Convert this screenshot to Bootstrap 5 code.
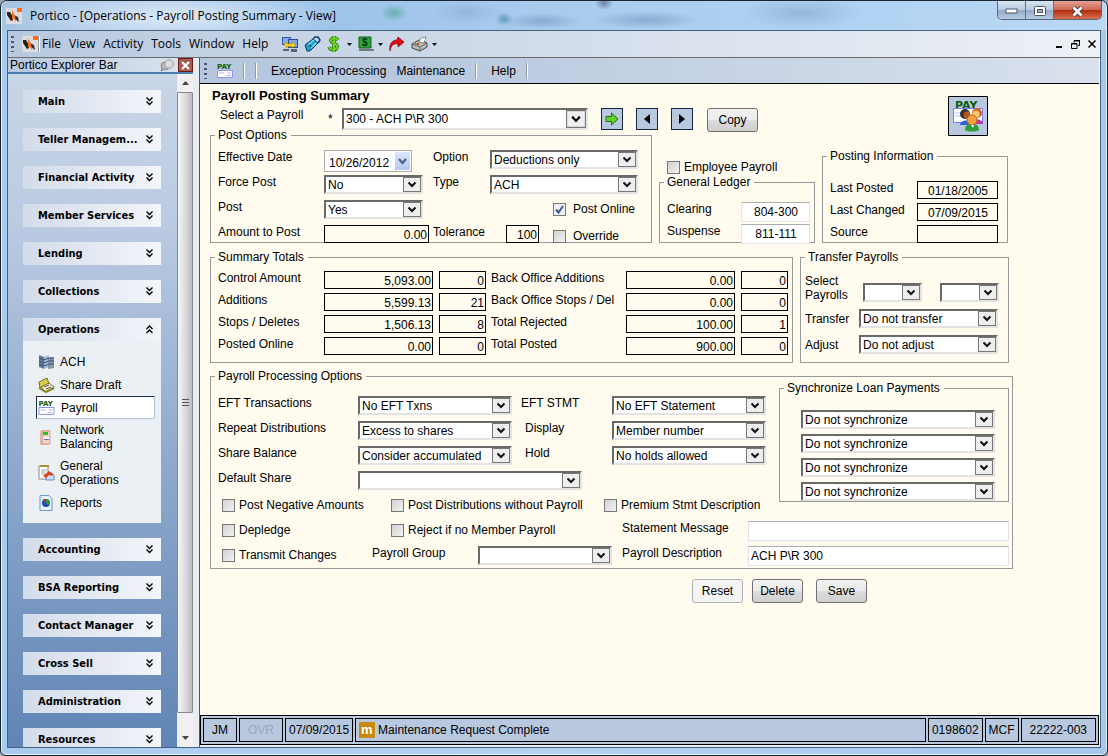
<!DOCTYPE html>
<html lang="en">
<head>
<meta charset="utf-8">
<meta name="viewport" content="width=device-width, initial-scale=1">
<title>Portico - Payroll Posting Summary</title>
<link href="https://cdn.jsdelivr.net/npm/bootstrap@5.3.0/dist/css/bootstrap.min.css" rel="stylesheet">
<style>
body{font:12px/14px "Liberation Sans",Arial,sans-serif;color:#000;background:#9aa7b8}
.win{border:1px solid #1b2530;border-radius:7px 7px 6px 6px;background:linear-gradient(90deg,#a9cbee,#b3d3f3 50%,#a5c8ec);box-shadow:inset 0 0 0 1px #e4f1fd;padding:0 6px 7px}
.titlebar{height:29px;margin:0 -5px;padding-left:4px;border-radius:6px 6px 0 0;font:12px/16px "Open Sans","Segoe UI",sans-serif;
 background:radial-gradient(170px 30px at 170px 16px,rgba(240,247,255,.75),transparent),
 radial-gradient(14px 9px at 392px 12px,#3f9c8188,transparent),radial-gradient(34px 12px at 465px 11px,#7394b955,transparent),
 radial-gradient(9px 7px at 502px 18px,#3c7ea799,transparent),radial-gradient(40px 8px at 540px 20px,#5878a066,transparent),
 radial-gradient(9px 7px at 602px 2px,#3f506e99,transparent),radial-gradient(54px 9px at 645px 19px,#5878a066,transparent),
 radial-gradient(60px 16px at 800px 12px,#6f90b666,transparent),
 linear-gradient(90deg,#a7c4e2,#9dc3ea 28%,#a9cbee 50%,#b0d2f2 75%,#b9d8f5)}
.titlebar,.menubar{flex:none}
.capbtns{height:19px;border:1px solid #56657a;border-top:0;border-radius:0 0 5px 5px;overflow:hidden}
.capbtns button{width:28px;height:19px;border:0;border-right:1px solid #5f7086;padding:0;background:linear-gradient(#d8e5f2,#b9cce0 45%,#93abc6 50%,#b9d0e8)}
.capbtns .close-x{width:47px;border-right:0;background:linear-gradient(#e3a195,#cf6a58 45%,#b32b12 50%,#dc7a56)}
.client{border:1px solid #47607c;background:#e9edf3}
.menubar{height:27px;padding:0 4px 0 3px;border-bottom:1px solid #6b6b6b;background:linear-gradient(90deg,#b8c9df,#cdd9e8 40%,#eef1f6);font:12px/16px "Open Sans","Segoe UI",sans-serif}
.menus{gap:8px;margin:0 14px 0 2px}
.icons{gap:6px}
.icons .drop{display:flex;align-items:center;gap:4px}
.grip{width:3px;height:16px;background:repeating-linear-gradient(#44587c 0 2px,transparent 2px 5px)}
.menubar a,.tools a{color:#000;text-decoration:none}
.plain{border:0;background:none;padding:0;line-height:0}
.side{width:185px;flex:none}
.sidehead{height:16px;border-bottom:2px solid #4d7db0;background:linear-gradient(90deg,#b7c7de,#dde5ef);padding-left:2px}
.pinx{width:15px;height:14px;border:1px solid #6e1a12;background:#a85b50;padding:0;line-height:0}
.sidenav{background:linear-gradient(#c8d5e6,#bccbe2 22%,#a3b9d7 40%,#6085b5);padding:16px 16px 0 15px;overflow:hidden;min-height:0}
.sidenav section{margin-bottom:15px}
.grp{display:flex;align-items:center;width:100%;height:23px;border:0;padding:0 8px 0 15px;background:linear-gradient(90deg,#d3dcea,#f3f5fa);font:bold 11px/14px "DejaVu Sans Condensed","Noto Sans",Tahoma,sans-serif;text-align:left;white-space:nowrap}
.grp svg{margin-left:auto}
.opl{background:#ebf0f4;padding:9px 6px 9px 13px;margin:0}
.opl a{display:flex;align-items:center;gap:5px;min-height:23px;color:#000;text-decoration:none;padding:0 0 0 2px}
.opl a span{padding:4px 0}
.opl a.active{background:#fff;border:1px solid #b3c5dc;border-top-color:#1c2f48;border-left-color:#1c2f48;padding-left:1px;gap:6px}
.opl svg{flex:none}
.scroll{width:16px;flex:none;background:#f0f0f0}
.scroll button{height:18px;border:0;padding:0;background:none;line-height:0}
.thumb{border:1px solid #888;border-radius:1px;background:linear-gradient(90deg,#f6f6f6,#dcdce0 50%,#bbbbc1)}
.mainpane{border-left:1px solid #555;border-right:1px solid #fff;margin-left:6px;min-width:0}
.tools{height:26px;border-bottom:1px solid #000;background:linear-gradient(90deg,#b6c7de 20%,#d9e1ec);flex:none;gap:10px}
.vsep{width:2px;height:16px;border-left:1px solid #909aa8;background:#fff}
.form-area{background:#fffbef;padding:0 11px 0 10px;min-height:0;overflow:hidden}
.head{height:45px}
.form-area h1{font:bold 13px/14px "Liberation Sans",Arial,sans-serif;margin:5px 0 5px 2px}
.head .lab{width:118px;padding-left:10px}
.head .star{width:14px;padding-top:4px}
.head .sq{margin-left:13px}
.head .cmd{margin-left:14px}
.payimg{margin:12px 100px 0 0;flex:none}
fieldset{border:1px solid #999;padding:0 7px;margin:0;min-width:0}
fieldset legend{float:none;width:auto;font-size:12px;line-height:12px;padding:0 4px 0 3px;margin:0 0 0 -3px}
.form-area label{line-height:14px;white-space:nowrap}
.form-area select{appearance:none;font-size:12px;line-height:14px;height:19px;padding:0 18px 0 2px;color:#000;border:2px solid #e3e3e3;border-top-color:#696969;border-left-color:#696969;border-radius:0;
 background:#fff url("data:image/svg+xml,%3Csvg xmlns='http://www.w3.org/2000/svg' width='18' height='15'%3E%3Crect x='.5' y='.5' width='17' height='14' fill='%23eee' stroke='%23777'/%3E%3Cpath d='M5.500 5.500 9 9l3.500-3.500' fill='none' stroke='%23111' stroke-width='2'/%3E%3C/svg%3E") no-repeat right center}
.form-area select.tall{height:22px;background-size:20px 18px;padding-right:20px}
.form-area input[type=text]{font-size:12px;line-height:14px;height:18px;padding:1px 1px 0 2px;border:1px solid #000;border-radius:0;background:#fffbef;color:#000}
.form-area input.edit{height:20px;padding-top:0;border-color:#abadb3 #e2e3ea #e2e3ea #e2e3ea;background:#fff}
.num{text-align:right}.ctr{text-align:center}
.form-area input[type=checkbox]{appearance:none;width:13px;height:13px;flex:none;border:1px solid #777;background:linear-gradient(135deg,#d2d2d4,#f3f3f3)}
.form-area input[type=checkbox]:checked{background:#eef0f4 url("data:image/svg+xml,%3Csvg xmlns='http://www.w3.org/2000/svg' width='11' height='11'%3E%3Cpath d='M2 5.500 4.500 8.500 9 2' fill='none' stroke='%233c5a94' stroke-width='2'/%3E%3C/svg%3E")}
.chk{display:flex;align-items:center;gap:4px;height:18px}
.fgrid{display:grid;align-items:start}
.w-date{width:88px;height:22px;border:1px solid #aaa;background:#fff}
.form-area .w-date input{border:0;background:#fff;height:20px;width:66px;padding:3px 0 0 4px}
.w-date button{width:15px;height:18px;margin:1px;border:0;padding:0;line-height:0;background:linear-gradient(#dbe6fc,#b4c8f2)}
.sq{width:22px;height:22px;border:1px solid #16263c;background:#b8c9df;padding:0;line-height:0}
.cmd{min-width:51px;height:24px;border:1px solid #707070;border-radius:3px;padding:0 6px;background:linear-gradient(#f2f2f2,#ebebeb 48%,#dcdcdc 52%,#cfcfcf);font-size:12px;line-height:14px}
.cmd.off{border-color:#adb2b5;background:#f4f4f4}
.s99{width:99px}.s148{width:148px}.s154{width:154px}.s139{width:139px}.s194{width:194px}.s59{width:59px}.s223{width:224px}.s134{width:134px}.s246{width:246px}
.g-post{grid-template:25px 25px 25px 17px / 106px 109px 57px 1fr;padding-top:9px}
.g-gl{grid-template:22px 18px / 74px 69px;padding-top:14px}
.g-info{grid-template:22px 22px 17px / 87px 81px;padding-top:19px}
.g-sum{grid-template:repeat(4,22px) / 106px 115px 52px 135px 115px 47px;padding:8px 0 3px}
.g-sum>:nth-child(3n+2){width:109px}.g-sum>:nth-child(3n){width:47px}
.g-proc{grid-template:repeat(4,25px) / 140px 163px 91px 154px;padding-top:14px}
.fgrid label{justify-self:start}
.gap7{gap:7px}
.f-post{width:442px}.f-gl{width:156px}.f-info{width:186px}.f-sum{width:583px}.f-trans{width:209px;padding:0 4px}.f-proc{width:803px}
fieldset.f-proc{margin-top:7px;padding-right:3px}
.f-trans legend{margin-left:0}
.offs{padding-left:63px}.w105{width:105px}
.chk.offs,.tolrow .chk{gap:7px}
.tolrow .chk{height:22px}
.tolrow input#tol{width:33px;margin:0 14px 0 16px}
.trrows{gap:7px;padding-top:11px}
.trrows>div{gap:18px}
.trrows label{width:54px;margin-right:-18px}
.f-sync{width:230px;flex:none}
.syncs{gap:5px;padding:16px 0 0 14px}
.lowrow{height:25px}.lastrow{height:22px}
.c169{width:169px}.c213{width:213px}.c231{width:231px}.c126{width:126px}.c150{width:150px}.c106{width:106px}.c144{width:144px}
.btnrow{justify-content:flex-end;gap:9px;margin-top:10px;padding-right:146px}
.status{flex:none;background:#b8c9df;border:1px solid #000;padding:2px;gap:2px;height:30px;margin-bottom:2px}
.status>div{border:1px solid #000;height:24px;padding:0 8px;display:flex;align-items:center;justify-content:center;white-space:nowrap}
.status .text-dim{color:#9aa6b6}
.status .slim{padding:0 3px}
.status .msgcell{justify-content:flex-start;padding-left:3px;gap:3px}
</style>
</head>
<body>
<svg width="0" height="0" class="position-absolute" aria-hidden="true"><defs>
<symbol id="logo" viewBox="0 0 16 16"><path d="M0 0h16v16H0z" fill="#dcdcdf"/><path d="M1 4h3l3 5v3L5 13 1 7z" fill="#222"/><path d="M8 7l4 2 1 5-4-3z" fill="#333"/><path d="M6 2l3 6 1 6-3-4-1 2z" fill="#f36f21"/><path d="M11 0h5v4h-5z" fill="#ff6a13"/></symbol>
<symbol id="down" viewBox="0 0 7 9"><path d="M.5.500 3.500 3.500 6.500.5M.5 4.500 3.500 7.500 6.500 4.500" fill="none" stroke="#000" stroke-width="1.400"/></symbol>
<symbol id="up" viewBox="0 0 7 9"><path d="M.5 4 3.500 1 6.500 4M.5 8 3.500 5 6.500 8" fill="none" stroke="#000" stroke-width="1.400"/></symbol>
<symbol id="pay" viewBox="0 0 16 16"><text x="0" y="6" font-family="DejaVu Sans" font-weight="bold" font-size="7" fill="#0b5a0b">PAY</text><path d="M.5 7.500h15v7H.5z" fill="#fff" stroke="#8f8fff"/><path d="M2 10h5M10 10h4M9 12.500h5" stroke="#b5b5f5"/></symbol>
</defs></svg>

<div class="win vh-100 d-flex flex-column">
 <header class="titlebar d-flex align-items-center">
  <svg width="16" height="16" class="me-2"><use href="#logo"/></svg>
  <span class="flex-grow-1">Portico - [Operations - Payroll Posting Summary - View]</span>
  <div class="capbtns d-flex align-self-start me-1">
   <button aria-label="Minimize"><svg width="13" height="6"><rect x="1" y="1" width="11" height="4" fill="#fff" stroke="#4d596b"/></svg></button>
   <button aria-label="Maximize"><svg width="12" height="10"><rect x=".5" y=".5" width="11" height="9" rx="1" fill="#fff" stroke="#4d596b"/><rect x="3.500" y="3.500" width="5" height="3" fill="#9bb2cc" stroke="#4d596b"/></svg></button>
   <button class="close-x" aria-label="Close"><svg width="13" height="11"><path d="M2.500 1.500 10.500 9.500M10.500 1.500 2.500 9.500" stroke="#53323a" stroke-width="4.500"/><path d="M2.500 1.500 10.500 9.500M10.500 1.500 2.500 9.500" stroke="#fff" stroke-width="2.600"/></svg></button>
  </div>
 </header>

 <div class="client flex-grow-1 d-flex flex-column overflow-hidden">
  <nav class="menubar d-flex align-items-center">
   <span class="grip me-2"></span>
   <svg width="16" height="16"><use href="#logo"/></svg><span class="vsep"></span>
   <div class="d-flex flex-grow-1 align-items-center">
    <div class="d-flex menus"><a href="#">File</a><a href="#">View</a><a href="#">Activity</a><a href="#">Tools</a><a href="#">Window</a><a href="#">Help</a></div>
    <div class="d-flex align-items-center icons">
    <button class="plain" aria-label="Connect"><svg width="16" height="15"><path d="M0 0h9v8H0z" fill="#3553a4"/><path d="M1 1h7v6H1z" fill="#7db2f2"/><path d="M6 2h10v9H6z" fill="#2f4690"/><path d="M7 3h8v7H7z" fill="#7fa8ea"/><path d="M2 8l3-3v2h5V5l4 3-4 3V9.500H5V11z" fill="#ffd21e" stroke="#a97c00" stroke-width=".5"/><path d="M1 12h6v2H1zM9 12h6v3H9z" fill="#5d6272"/></svg></button>
    <button class="plain" aria-label="Card reader"><svg width="17" height="16"><path d="M1 9 9 3l5 4-8 8H3z" fill="#1d9cc9" stroke="#0a3d66"/><path d="M9 3l2-2h3l2 3-2 3M4 8l5 4" fill="none" stroke="#0a3d66" stroke-width="1.500"/><path d="M4 9l6-5M7 12l5-5" stroke="#7bdcf3" stroke-width="1.500"/></svg></button>
    <div class="drop"><button class="plain" aria-label="Money"><svg width="16" height="16"><path d="M11 4C9 1 3 2 4 5s7 2 6 6-7 3-8 0M7 0v16" fill="none" stroke="#1d6d10" stroke-width="3.400"/><path d="M11 4C9 1 3 2 4 5s7 2 6 6-7 3-8 0M7 0v16" fill="none" stroke="#6fd11f" stroke-width="2"/></svg></button>
    <svg width="5" height="3"><path d="M0 0h5L2.500 3z"/></svg></div>
    <div class="drop"><button class="plain" aria-label="Cash"><svg width="16" height="16"><path d="M1 1h12v11H1z" fill="#2ca53c" stroke="#145c1d"/><path d="M1 13h15v2H1z" fill="#778"/><text x="4" y="10" font-size="10" font-weight="bold" font-family="Liberation Sans" fill="#031">$</text></svg></button>
    <svg width="5" height="3"><path d="M0 0h5L2.500 3z"/></svg></div>
    <button class="plain" aria-label="Forward"><svg width="16" height="16"><path d="M1 15C0 8 3 4 8 4l1-3 6 5-6 5V8C5 7 2 9 1 15z" fill="#e00b12" stroke="#7e0508" stroke-width=".7"/></svg></button>
    <div class="drop"><button class="plain" aria-label="Print"><svg width="17" height="16"><path d="M1 8l7-4 8 3v4l-7 4-8-3z" fill="#bdbdb8" stroke="#444"/><path d="M8 6l2-4 5-1-2 6z" fill="#fff" stroke="#555" stroke-width=".6"/><path d="M1 8l8 3 7-4M9 11v4" fill="none" stroke="#666"/><path d="M6 8h2" stroke="#e22" stroke-width="2"/><path d="M4 8h1.500" stroke="#2c2" stroke-width="2"/></svg></button>
    <svg width="5" height="3"><path d="M0 0h5L2.500 3z"/></svg></div>
    </div>
   </div>
   <button class="plain me-1" aria-label="Minimize document"><svg width="8" height="8"><path d="M1 6h6v2H1z"/></svg></button>
   <button class="plain mx-1" aria-label="Restore document"><svg width="9" height="9"><path d="M3 2.500V1h5.500v4.500H7M3 .5h6M.5 3.500h5.500v5H.5zM0 4h6" fill="none" stroke="#000"/></svg></button>
   <button class="plain ms-1" aria-label="Close document"><svg width="8" height="8"><path d="M.5.500l7 7M7.500.5l-7 7" stroke="#000" stroke-width="1.500"/></svg></button>
  </nav>

  <div class="d-flex flex-grow-1 overflow-hidden">
   <aside class="side d-flex flex-column">
    <div class="sidehead d-flex align-items-center">
     <span class="flex-grow-1">Portico Explorer Bar</span>
     <button class="plain me-1" aria-label="Pin"><svg width="14" height="13"><path d="M1 12l4-4" stroke="#777" stroke-width="1.500"/><ellipse cx="5" cy="7" rx="4" ry="4" fill="#bbb" stroke="#888"/><circle cx="9" cy="5" r="4.300" fill="#ddd" stroke="#999"/></svg></button>
     <button class="pinx" aria-label="Close bar"><svg width="9" height="9"><path d="M1 1l7 7M8 1 1 8" stroke="#fff" stroke-width="2.200"/></svg></button>
    </div>
    <div class="d-flex flex-grow-1 overflow-hidden">
     <nav class="sidenav flex-grow-1">
      <section><button class="grp">Main<svg width="7" height="9"><use href="#down"/></svg></button></section>
      <section><button class="grp">Teller Managem...<svg width="7" height="9"><use href="#down"/></svg></button></section>
      <section><button class="grp">Financial Activity<svg width="7" height="9"><use href="#down"/></svg></button></section>
      <section><button class="grp">Member Services<svg width="7" height="9"><use href="#down"/></svg></button></section>
      <section><button class="grp">Lending<svg width="7" height="9"><use href="#down"/></svg></button></section>
      <section><button class="grp">Collections<svg width="7" height="9"><use href="#down"/></svg></button></section>
      <section><button class="grp">Operations<svg width="7" height="9"><use href="#up"/></svg></button>
       <ul class="opl list-unstyled">
        <li><a href="#"><svg width="17" height="16"><path d="M1 1l5 2v12l-5-2z" fill="#5f7a9e"/><path d="M6 3l5-2v12l-5 2z" fill="#a9bad0"/><path d="M10 4l6-1v11l-6 1z" fill="#8795aa"/><path d="M1 4l5 2 5-2 5 0M1 7l5 2 5-2 5 0M1 10l5 2 5-2 5 0" fill="none" stroke="#3c4f6e"/></svg>ACH</a></li>
        <li><a href="#"><svg width="17" height="16"><path d="M1 5l8-4 2 6-9 4z" fill="#d8c94a" stroke="#77701c"/><path d="M3 10l8-4 5 4-8 5z" fill="#ecebd0" stroke="#77701c"/><path d="M1 11l7 4 8-4" fill="none" stroke="#8c8424" stroke-width="2"/><path d="M6 10l5-2M8 12l5-2" stroke="#555"/></svg>Share Draft</a></li>
        <li><a href="#" class="active"><svg width="17" height="16"><use href="#pay"/></svg>Payroll</a></li>
        <li><a href="#"><svg width="17" height="16"><path d="M2 2l2-1h8v13l-2 2H2z" fill="#e8b9ab"/><path d="M4 2h8v13H4z" fill="#f3d3c8" stroke="#c78e7e" stroke-width=".7"/><path d="M5 3h5v3H5z" fill="#22c52a"/><path d="M6 8h5v2H6z" fill="#fff"/><path d="M6 10.500h5" stroke="#7d6ab8"/></svg><span>Network<br>Balancing</span></a></li>
        <li><a href="#"><svg width="17" height="16"><path d="M1 1h9v13H1z" fill="#fff" stroke="#888"/><path d="M2 1h9" stroke="#b08d2f" stroke-width="2"/><path d="M3 5h6M3 7h5M3 9h4" stroke="#9ab"/><path d="M8 10l4-3 4 3v5H8z" fill="#cfe0f5" stroke="#3c64a5" stroke-width=".7"/><path d="M5 11l6-5 4 3-1 2-3-1-3 3z" fill="#d8421f"/></svg><span>General<br>Operations</span></a></li>
        <li><a href="#"><svg width="17" height="16"><path d="M2 .5h9l3 3v12H2z" fill="#e8f1fc" stroke="#6f96c8"/><circle cx="8" cy="8" r="4" fill="#2748b8"/><path d="M8 8V4a4 4 0 0 1 3 6.500z" fill="#2aa637"/><path d="M8 8l-3-3a4 4 0 0 1 3-1z" fill="#d22"/></svg>Reports</a></li>
       </ul>
      </section>
      <section><button class="grp">Accounting<svg width="7" height="9"><use href="#down"/></svg></button></section>
      <section><button class="grp">BSA Reporting<svg width="7" height="9"><use href="#down"/></svg></button></section>
      <section><button class="grp">Contact Manager<svg width="7" height="9"><use href="#down"/></svg></button></section>
      <section><button class="grp">Cross Sell<svg width="7" height="9"><use href="#down"/></svg></button></section>
      <section><button class="grp">Administration<svg width="7" height="9"><use href="#down"/></svg></button></section>
      <section><button class="grp">Resources<svg width="7" height="9"><use href="#down"/></svg></button></section>
     </nav>
     <div class="scroll d-flex flex-column">
      <button aria-label="Scroll up"><svg width="7" height="4"><path d="M3.500 0 7 4H0z" fill="#444"/></svg></button>
      <div class="thumb flex-grow-1 d-flex align-items-center justify-content-center mb-3"><svg width="7" height="8"><path d="M0 .5h7M0 3.500h7M0 6.500h7" stroke="#555"/></svg></div>
      <button aria-label="Scroll down"><svg width="7" height="4"><path d="M0 0h7L3.500 4z" fill="#444"/></svg></button>
     </div>
    </div>
   </aside>

   <main class="mainpane flex-grow-1 d-flex flex-column">
    <nav class="tools d-flex align-items-center ps-1">
     <span class="grip"></span><svg width="16" height="16"><use href="#pay"/></svg>
     <span class="vsep"></span><span class="vsep me-1"></span>
     <a href="#">Exception Processing</a><a href="#">Maintenance</a><span class="vsep me-1"></span>
     <a href="#">Help</a><span class="vsep"></span>
    </nav>

    <form class="form-area flex-grow-1">
     <div class="head d-flex justify-content-between">
      <div>
       <h1>Payroll Posting Summary</h1>
       <div class="d-flex align-items-start">
        <label for="payroll" class="lab">Select a Payroll</label><span class="star">*</span>
        <select id="payroll" class="tall s246"><option>300 - ACH P\R 300</option></select>
        <button type="button" class="sq" aria-label="Go"><svg width="14" height="14"><path d="M1 4.500h5.500V1L13 7l-6.500 6V9.500H1z" fill="#62d22b" stroke="#207211"/></svg></button>
        <button type="button" class="sq" aria-label="Previous"><svg width="6" height="10"><path d="M6 0v10L0 5z"/></svg></button>
        <button type="button" class="sq" aria-label="Next"><svg width="6" height="10"><path d="M0 0v10l6-5z"/></svg></button>
        <button type="button" class="cmd">Copy</button>
       </div>
      </div>
      <svg width="40" height="40" class="payimg"><path d="M.5.500h39v39H.5z" fill="#b8c9df" stroke="#000"/><text x="7" y="13" font-family="DejaVu Sans" font-weight="bold" font-size="11" fill="#0b5a0b">PAY</text><path d="M5.500 12.500h29v14h-29z" fill="#fff" stroke="#7d7df5"/><path d="M7 17h8M7 20h6" stroke="#bbf"/><path d="M12 29c0-6 12-6 12 0z" fill="#2d62d8"/><circle cx="17" cy="18" r="5" fill="#333"/><circle cx="19" cy="19" r="3.500" fill="#b4581c"/><path d="M24 28c0-6 11-6 11 0z" fill="#c335b0"/><circle cx="29" cy="17" r="5" fill="#d0641b"/><circle cx="28" cy="18" r="3.500" fill="#fbc878"/><path d="M17 34c0-9 14-9 14 0-3 2-11 2-14 0z" fill="#2d9d3c"/><circle cx="24" cy="24" r="5" fill="#f3a041" stroke="#b96d16"/><path d="M23 29h3l-1 3z" fill="#fff"/></svg>
     </div>

     <div class="d-flex align-items-end gap7">
      <fieldset class="f-post"><legend>Post Options</legend>
       <div class="fgrid g-post">
        <label for="eff">Effective Date</label>
        <div class="w-date d-flex"><input type="text" id="eff" value="10/26/2012"><button type="button" aria-label="Pick date" class="ms-auto"><svg width="9" height="7"><path d="M1 1l3.500 4L8 1" fill="none" stroke="#4a6185" stroke-width="2.200"/></svg></button></div>
        <label for="opt">Option</label><select id="opt" class="s148"><option>Deductions only</option></select>
        <label for="force">Force Post</label><select id="force" class="s99"><option>No</option></select>
        <label for="type">Type</label><select id="type" class="s148"><option>ACH</option></select>
        <label for="post">Post</label><select id="post" class="s99"><option>Yes</option></select>
        <span></span><div class="chk offs"><input type="checkbox" id="online" checked><label for="online">Post Online</label></div>
        <label for="amt">Amount to Post</label><input type="text" id="amt" class="num w105" value="0.00">
        <label for="tol">Tolerance</label><div class="d-flex tolrow"><input type="text" id="tol" class="num" value="100"><div class="chk"><input type="checkbox" id="over"><label for="over">Override</label></div></div>
       </div>
      </fieldset>
      <div class="f-gl">
       <div class="chk ps-2"><input type="checkbox" id="emp"><label for="emp">Employee Payroll</label></div>
       <fieldset><legend>General Ledger</legend>
        <div class="fgrid g-gl">
         <label for="clr">Clearing</label><input type="text" id="clr" class="edit ctr" value="804-300">
         <label for="sus">Suspense</label><input type="text" id="sus" class="edit ctr" value="811-111">
        </div>
       </fieldset>
      </div>
      <fieldset class="f-info"><legend>Posting Information</legend>
       <div class="fgrid g-info">
        <label for="lp">Last Posted</label><input type="text" id="lp" class="ctr" value="01/18/2005" readonly>
        <label for="lc">Last Changed</label><input type="text" id="lc" class="ctr" value="07/09/2015" readonly>
        <label for="src">Source</label><input type="text" id="src" readonly>
       </div>
      </fieldset>
     </div>

     <div class="d-flex gap7 mt-2">
      <fieldset class="f-sum"><legend>Summary Totals</legend>
       <div class="fgrid g-sum">
        <label for="t1">Control Amount</label><input type="text" id="t1" class="num" value="5,093.00" readonly><input type="text" aria-label="Control count" class="num" value="0" readonly>
        <label for="t2">Back Office Additions</label><input type="text" id="t2" class="num" value="0.00" readonly><input type="text" aria-label="Back office additions count" class="num" value="0" readonly>
        <label for="t3">Additions</label><input type="text" id="t3" class="num" value="5,599.13" readonly><input type="text" aria-label="Additions count" class="num" value="21" readonly>
        <label for="t4">Back Office Stops / Del</label><input type="text" id="t4" class="num" value="0.00" readonly><input type="text" aria-label="Back office stops count" class="num" value="0" readonly>
        <label for="t5">Stops / Deletes</label><input type="text" id="t5" class="num" value="1,506.13" readonly><input type="text" aria-label="Stops count" class="num" value="8" readonly>
        <label for="t6">Total Rejected</label><input type="text" id="t6" class="num" value="100.00" readonly><input type="text" aria-label="Rejected count" class="num" value="1" readonly>
        <label for="t7">Posted Online</label><input type="text" id="t7" class="num" value="0.00" readonly><input type="text" aria-label="Posted online count" class="num" value="0" readonly>
        <label for="t8">Total Posted</label><input type="text" id="t8" class="num" value="900.00" readonly><input type="text" aria-label="Posted count" class="num" value="0" readonly>
       </div>
      </fieldset>
      <fieldset class="f-trans"><legend>Transfer Payrolls</legend>
       <div class="d-flex flex-column trrows">
        <div class="d-flex align-items-end"><label for="p1">Select<br>Payrolls</label><select id="p1" class="s59 ms-1"><option></option></select><select aria-label="Second payroll" class="s59"><option></option></select></div>
        <div class="d-flex align-items-center"><label for="tr">Transfer</label><select id="tr" class="s139"><option>Do not transfer</option></select></div>
        <div class="d-flex align-items-center"><label for="ad">Adjust</label><select id="ad" class="s139"><option>Do not adjust</option></select></div>
       </div>
      </fieldset>
     </div>

     <fieldset class="f-proc"><legend>Payroll Processing Options</legend>
      <div class="d-flex align-items-start">
       <div class="flex-grow-1">
        <div class="fgrid g-proc">
         <label for="eft">EFT Transactions</label><select id="eft" class="s154"><option>No EFT Txns</option></select>
         <label for="stmt">EFT STMT</label><select id="stmt" class="s154"><option>No EFT Statement</option></select>
         <label for="rep">Repeat Distributions</label><select id="rep" class="s154"><option>Excess to shares</option></select>
         <label for="disp" class="ps-1">Display</label><select id="disp" class="s154"><option>Member number</option></select>
         <label for="bal">Share Balance</label><select id="bal" class="s154"><option>Consider accumulated</option></select>
         <label for="hold" class="ps-1">Hold</label><select id="hold" class="s154"><option>No holds allowed</option></select>
         <label for="def">Default Share</label><select id="def" class="s223"><option></option></select>
        </div>
        <div class="d-flex ps-1 lowrow">
         <div class="chk c169"><input type="checkbox" id="neg"><label for="neg">Post Negative Amounts</label></div>
         <div class="chk c213"><input type="checkbox" id="wo"><label for="wo">Post Distributions without Payroll</label></div>
         <div class="chk"><input type="checkbox" id="prem"><label for="prem">Premium Stmt Description</label></div>
        </div>
       </div>
       <fieldset class="f-sync"><legend>Synchronize Loan Payments</legend>
        <div class="d-flex flex-column syncs">
         <select aria-label="Loan payment 1" class="s194"><option>Do not synchronize</option></select>
         <select aria-label="Loan payment 2" class="s194"><option>Do not synchronize</option></select>
         <select aria-label="Loan payment 3" class="s194"><option>Do not synchronize</option></select>
         <select aria-label="Loan payment 4" class="s194"><option>Do not synchronize</option></select>
        </div>
       </fieldset>
      </div>
      <div class="d-flex ps-1 lowrow">
       <div class="chk c169"><input type="checkbox" id="dep"><label for="dep">Depledge</label></div>
       <div class="chk c231"><input type="checkbox" id="rej"><label for="rej">Reject if no Member Payroll</label></div>
       <label for="msg" class="c126">Statement Message</label><input type="text" id="msg" class="edit flex-grow-1">
      </div>
      <div class="d-flex ps-1 lastrow">
       <div class="chk c150"><input type="checkbox" id="tx"><label for="tx">Transmit Changes</label></div>
       <label for="grpn" class="c106">Payroll Group</label><div class="c144"><select id="grpn" class="s134"><option></option></select></div>
       <label for="desc" class="c126">Payroll Description</label><input type="text" id="desc" class="edit flex-grow-1" value="ACH P\R 300">
      </div>
     </fieldset>

     <div class="f-proc d-flex btnrow"><button type="button" class="cmd off">Reset</button><button type="button" class="cmd">Delete</button><button type="button" class="cmd ms-1">Save</button></div>
    </form>

    <footer class="status d-flex">
     <div>JM</div><div class="text-dim">OVR</div><div class="slim">07/09/2015</div>
     <div class="flex-grow-1 msgcell"><svg width="16" height="16"><path d="M0 0h16v16H0z" fill="#c98a0a"/><text x="2" y="12" font-family="Liberation Sans" font-weight="bold" font-size="13" fill="#fff">m</text></svg>Maintenance Request Complete</div>
     <div class="slim">0198602</div><div class="slim">MCF</div><div>22222-003</div>
    </footer>
   </main>
  </div>
 </div>
</div>
<script src="https://cdn.jsdelivr.net/npm/bootstrap@5.3.0/dist/js/bootstrap.bundle.min.js"></script>
</body>
</html>
